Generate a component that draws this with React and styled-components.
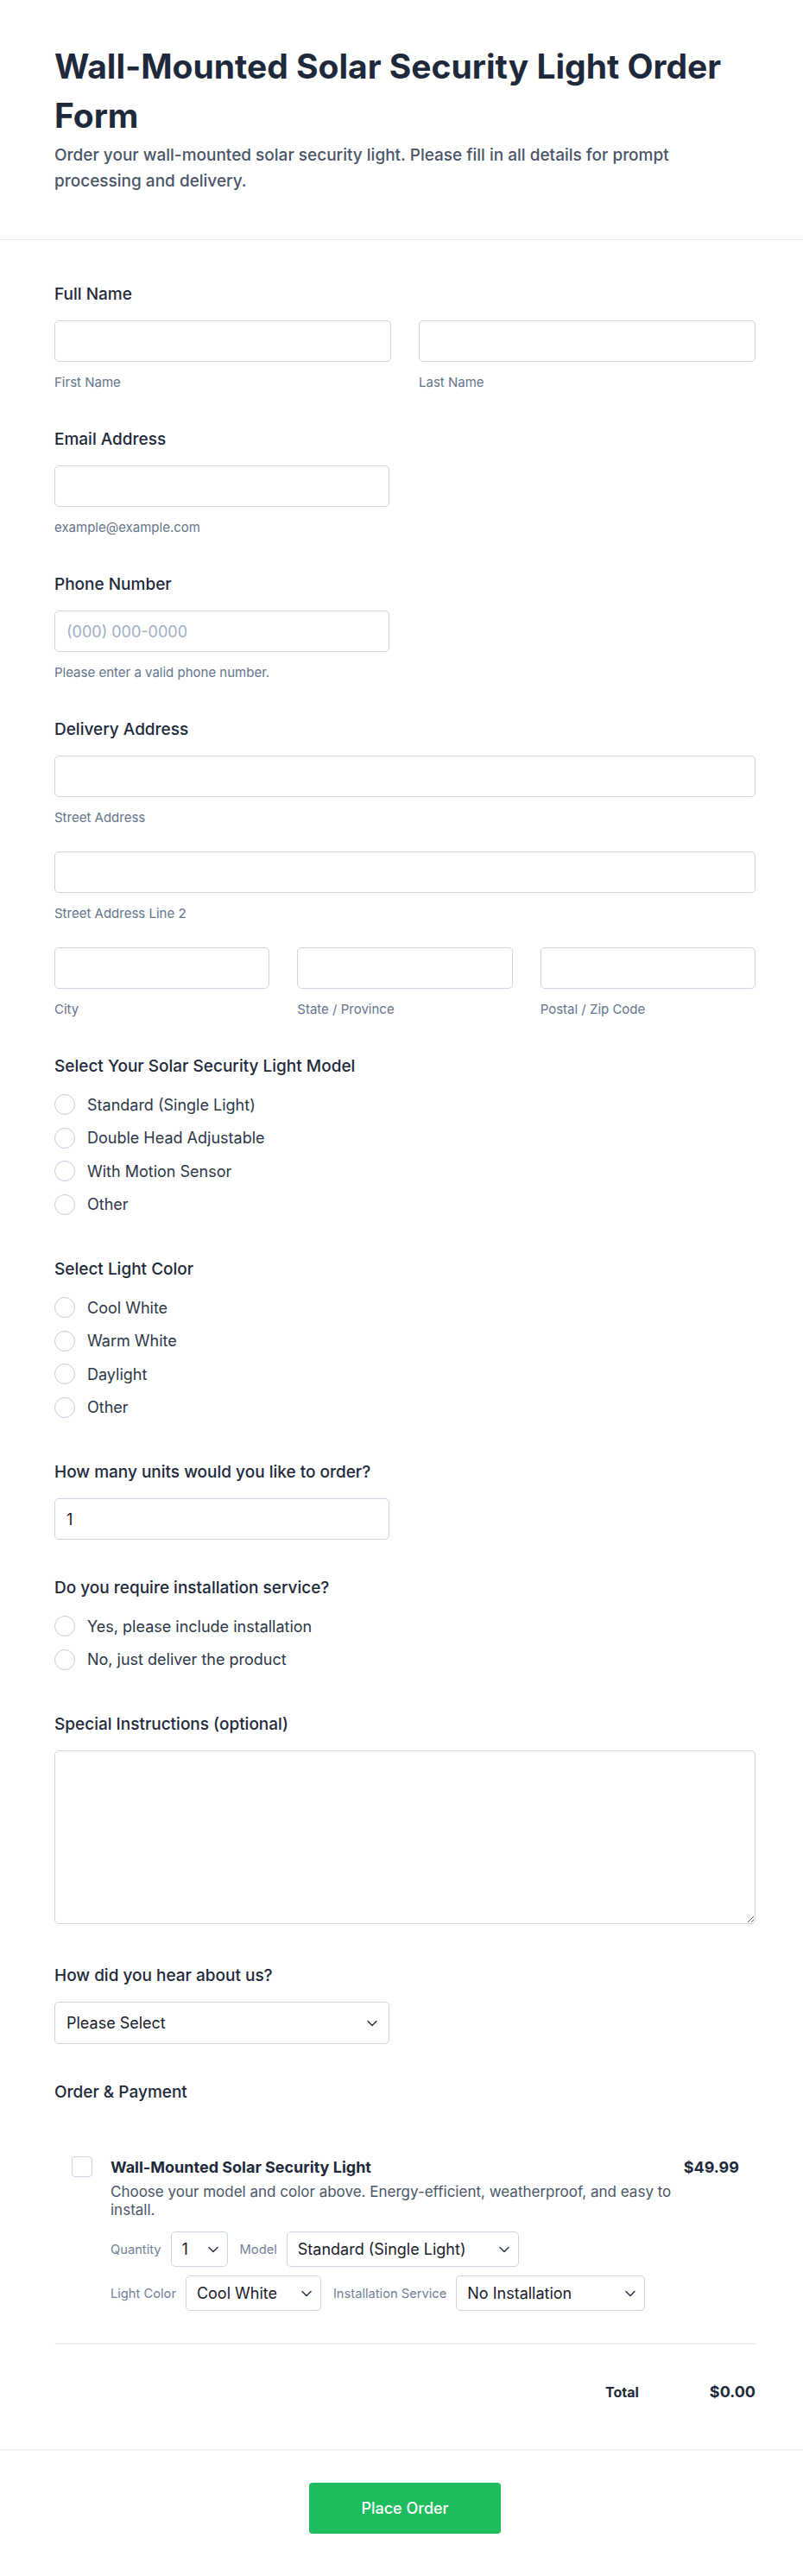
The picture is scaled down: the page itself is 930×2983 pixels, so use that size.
import React from 'react';
import styled, { createGlobalStyle } from 'styled-components';
import { ChevronDown } from 'lucide-react';

const GlobalStyle = createGlobalStyle`
  * {
    box-sizing: border-box;
  }
  body {
    margin: 0;
    background: #ffffff;
    font-family: Inter, "Noto Sans", Arial, sans-serif;
    color: #2d3748;
  }
`;

const Page = styled.div`
  width: 930px;
  background: #ffffff;
`;

const Header = styled.header`
  padding: 48px 55px 52px 63px;
  border-bottom: 1px solid #e2e8f0;
`;

const Title = styled.h1`
  margin: 0 0 3px;
  font-size: 39px;
  line-height: 57px;
  font-weight: 700;
  color: #1e293b;
`;

const Subtitle = styled.p`
  margin: 0;
  font-size: 19px;
  line-height: 30px;
  font-weight: 500;
  color: #4a5568;
`;

const Form = styled.form`
  padding: 49px 55px 54px 63px;
  display: flex;
  flex-direction: column;
  gap: 42px;
`;

const Field = styled.div`
  display: flex;
  flex-direction: column;
`;

const Label = styled.label`
  font-size: 19px;
  line-height: 27px;
  font-weight: 500;
  color: #1e293b;
  margin-bottom: ${p => p.$gap ?? 17}px;
`;

const Input = styled.input`
  width: ${p => (p.$narrow ? '388px' : '100%')};
  height: 48px;
  padding: 0 13px;
  border: 1px solid #cbd5e0;
  border-radius: 5px;
  background: #ffffff;
  font-family: inherit;
  font-size: 18px;
  color: #1a202c;

  &::placeholder {
    color: #a0aec0;
  }
`;

const Hint = styled.span`
  margin-top: 13px;
  font-size: 15px;
  line-height: 21px;
  color: #64748b;
`;

const Grid = styled.div`
  display: grid;
  grid-template-columns: repeat(${p => p.$cols}, 1fr);
  column-gap: 32px;
  row-gap: 29px;
`;

const Cell = styled.div`
  display: flex;
  flex-direction: column;
  grid-column: span ${p => p.$span || 1};
`;

const ChoiceList = styled.div`
  display: flex;
  flex-direction: column;
`;

const Choice = styled.label`
  display: flex;
  align-items: center;
  gap: 14px;
  height: 38.5px;
  font-size: 18px;
  color: #2d3748;
`;

const Radio = styled.input.attrs({ type: 'radio' })`
  appearance: none;
  margin: 0;
  width: 24px;
  height: 24px;
  flex-shrink: 0;
  border: 1px solid #c5ccd8;
  border-radius: 50%;
  background: #ffffff;
`;

const TextArea = styled.textarea`
  display: block;
  width: 100%;
  height: 201px;
  margin-bottom: 4px;
  padding: 12px 13px;
  border: 1px solid #cbd5e0;
  border-radius: 5px;
  font-family: inherit;
  font-size: 18px;
  color: #1a202c;
`;

const SelectWrap = styled.div`
  position: relative;
  flex-shrink: 0;
  width: ${p => p.$width}px;
`;

const Select = styled.select`
  appearance: none;
  width: 100%;
  height: ${p => (p.$small ? '41px' : '49px')};
  padding: 0 30px 0 ${p => (p.$small ? '12px' : '13px')};
  border: 1px solid #cbd5e0;
  border-radius: 5px;
  background: #ffffff;
  font-family: inherit;
  font-size: 18px;
  color: #1a202c;
`;

const Caret = styled(ChevronDown)`
  position: absolute;
  top: 50%;
  right: ${p => p.$right}px;
  transform: translateY(-50%);
  color: #2d3748;
  pointer-events: none;
`;

const ProductBox = styled.div`
  padding: 43px 19px 37px 20px;
  border-bottom: 2px solid #edf2f7;
`;

const Product = styled.div`
  display: flex;
  align-items: flex-start;
`;

const Check = styled.input.attrs({ type: 'checkbox' })`
  appearance: none;
  margin: 1px 21px 0 0;
  width: 24px;
  height: 24px;
  flex-shrink: 0;
  border: 1px solid #cbd5e0;
  border-radius: 4px;
  background: #ffffff;
`;

const Details = styled.div`
  flex: 1;
  min-width: 0;
`;

const ProductName = styled.div`
  font-size: 18px;
  line-height: 27px;
  font-weight: 700;
  color: #1e293b;
`;

const Description = styled.p`
  margin: 5px 0 0;
  font-size: 17px;
  line-height: 21px;
  color: #4a5568;
`;

const Options = styled.div`
  margin-top: 14px;
  display: flex;
  flex-wrap: wrap;
  column-gap: 14px;
  row-gap: 10px;
`;

const OptionGroup = styled.div`
  display: flex;
  align-items: center;
  gap: 11px;
`;

const OptionLabel = styled.span`
  font-size: 14.7px;
  color: #718096;
`;

const Price = styled.div`
  flex-shrink: 0;
  font-size: 18px;
  line-height: 27px;
  font-weight: 700;
  color: #1e293b;
`;

const TotalRow = styled.div`
  display: flex;
  justify-content: flex-end;
  align-items: center;
  gap: 82px;
  padding-top: 43px;
  font-weight: 700;
  color: #1e293b;
`;

const TotalLabel = styled.span`
  font-size: 16px;
  line-height: 24px;
`;

const TotalValue = styled.span`
  font-size: 18px;
  line-height: 24px;
`;

const Footer = styled.div`
  display: flex;
  justify-content: center;
  padding: 37px 55px 50px 63px;
  border-top: 2px solid #edf2f7;
`;

const SubmitButton = styled.button`
  width: 222px;
  height: 59px;
  border: none;
  border-radius: 4px;
  background: #1dbc5c;
  color: #ffffff;
  font-family: inherit;
  font-size: 18px;
  font-weight: 500;
`;

const RadioField = ({ label, name, options }) => (
  <Field>
    <Label $gap={12}>{label}</Label>
    <ChoiceList>
      {options.map(opt => (
        <Choice key={opt}>
          <Radio name={name} />
          {opt}
        </Choice>
      ))}
    </ChoiceList>
  </Field>
);

const Dropdown = ({ width, small, options, defaultValue }) => (
  <SelectWrap $width={width}>
    <Select $small={small} defaultValue={defaultValue}>
      {options.map(o => (
        <option key={o.label} value={o.value ?? o.label}>
          {o.label}
        </option>
      ))}
    </Select>
    <Caret size={20} strokeWidth={1.8} $right={small ? 7 : 10} />
  </SelectWrap>
);

const opts = list => list.map(label => ({ label }));

export default function App() {
  return (
    <Page>
      <GlobalStyle />
      <Header>
        <Title>Wall-Mounted Solar Security Light Order Form</Title>
        <Subtitle>
          Order your wall-mounted solar security light. Please fill in all details for prompt
          processing and delivery.
        </Subtitle>
      </Header>

      <Form onSubmit={e => e.preventDefault()}>
        <Field>
          <Label>Full Name</Label>
          <Grid $cols={2}>
            <Cell>
              <Input />
              <Hint>First Name</Hint>
            </Cell>
            <Cell>
              <Input />
              <Hint>Last Name</Hint>
            </Cell>
          </Grid>
        </Field>

        <Field>
          <Label>Email Address</Label>
          <Input $narrow type="email" />
          <Hint>example@example.com</Hint>
        </Field>

        <Field>
          <Label>Phone Number</Label>
          <Input $narrow placeholder="(000) 000-0000" />
          <Hint>Please enter a valid phone number.</Hint>
        </Field>

        <Field>
          <Label>Delivery Address</Label>
          <Grid $cols={3}>
            <Cell $span={3}>
              <Input />
              <Hint>Street Address</Hint>
            </Cell>
            <Cell $span={3}>
              <Input />
              <Hint>Street Address Line 2</Hint>
            </Cell>
            <Cell>
              <Input />
              <Hint>City</Hint>
            </Cell>
            <Cell>
              <Input />
              <Hint>State / Province</Hint>
            </Cell>
            <Cell>
              <Input />
              <Hint>Postal / Zip Code</Hint>
            </Cell>
          </Grid>
        </Field>

        <RadioField
          label="Select Your Solar Security Light Model"
          name="model"
          options={['Standard (Single Light)', 'Double Head Adjustable', 'With Motion Sensor', 'Other']}
        />

        <RadioField
          label="Select Light Color"
          name="color"
          options={['Cool White', 'Warm White', 'Daylight', 'Other']}
        />

        <Field>
          <Label>How many units would you like to order?</Label>
          <Input $narrow type="number" defaultValue="1" />
        </Field>

        <RadioField
          label="Do you require installation service?"
          name="install"
          options={['Yes, please include installation', 'No, just deliver the product']}
        />

        <Field>
          <Label>Special Instructions (optional)</Label>
          <TextArea />
        </Field>

        <Field>
          <Label>How did you hear about us?</Label>
          <Dropdown
            width={388}
            defaultValue=""
            options={[
              { label: 'Please Select', value: '' },
              ...opts(['Online Search', 'Social Media', 'Friend or Family', 'Other'])
            ]}
          />
        </Field>

        <Field>
          <Label>Order &amp; Payment</Label>
          <ProductBox>
            <Product>
              <Check />
              <Details>
                <ProductName>Wall-Mounted Solar Security Light</ProductName>
                <Description>
                  Choose your model and color above. Energy-efficient, weatherproof, and easy to install.
                </Description>
                <Options>
                  <OptionGroup>
                    <OptionLabel>Quantity</OptionLabel>
                    <Dropdown small width={66} options={opts(['1', '2', '3', '4', '5'])} />
                  </OptionGroup>
                  <OptionGroup>
                    <OptionLabel>Model</OptionLabel>
                    <Dropdown
                      small
                      width={269}
                      options={opts(['Standard (Single Light)', 'Double Head Adjustable', 'With Motion Sensor'])}
                    />
                  </OptionGroup>
                  <OptionGroup>
                    <OptionLabel>Light Color</OptionLabel>
                    <Dropdown small width={157} options={opts(['Cool White', 'Warm White', 'Daylight'])} />
                  </OptionGroup>
                  <OptionGroup>
                    <OptionLabel>Installation Service</OptionLabel>
                    <Dropdown small width={219} options={opts(['No Installation', 'With Installation'])} />
                  </OptionGroup>
                </Options>
              </Details>
              <Price>$49.99</Price>
            </Product>
          </ProductBox>
          <TotalRow>
            <TotalLabel>Total</TotalLabel>
            <TotalValue>$0.00</TotalValue>
          </TotalRow>
        </Field>
      </Form>

      <Footer>
        <SubmitButton type="submit">Place Order</SubmitButton>
      </Footer>
    </Page>
  );
}
